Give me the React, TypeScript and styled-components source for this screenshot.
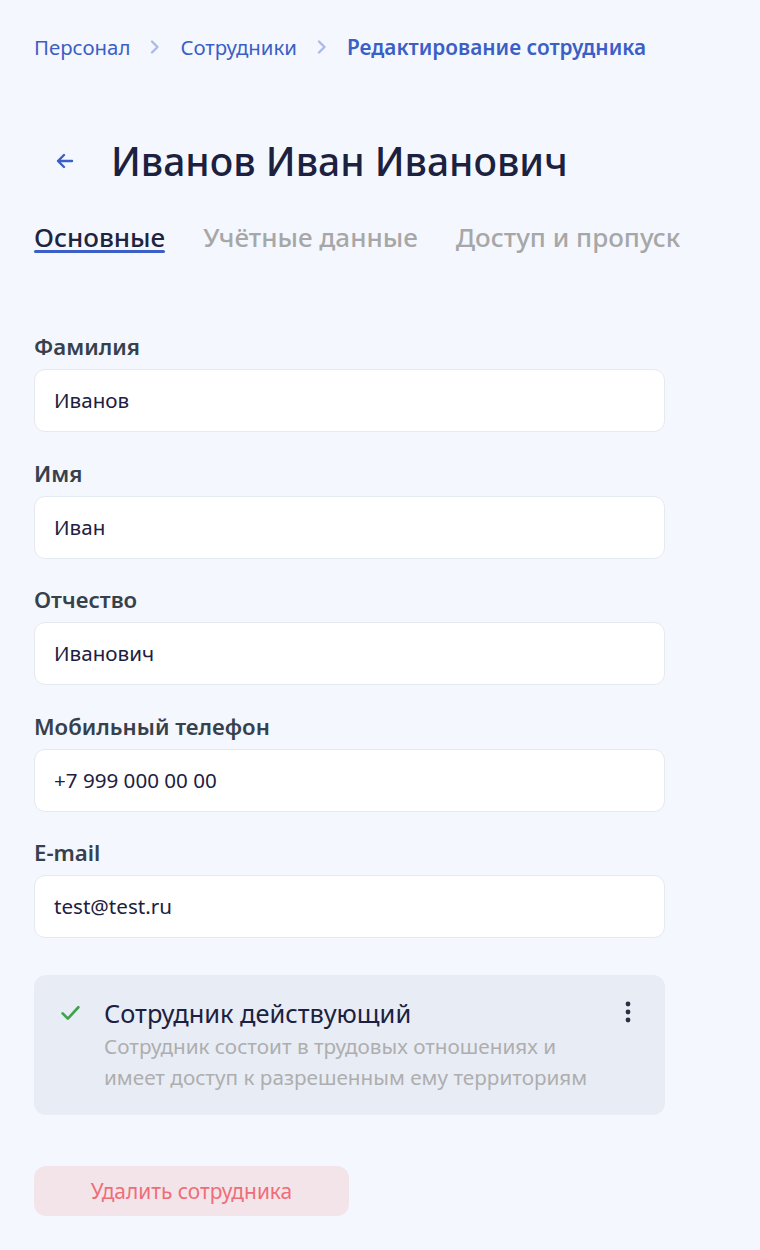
import React from "react";
import styled, { createGlobalStyle } from "styled-components";

const Global = createGlobalStyle`
  html, body { margin: 0; padding: 0; background: #f4f7fe; }
  body { font-family: "Noto Sans", "Open Sans", sans-serif; -webkit-font-smoothing: antialiased; }
  * { box-sizing: border-box; }
`;

const Page = styled.div`
  width: 760px;
  min-height: 1250px;
  background: #f4f7fe;
  padding: 31px 34px 0 34px;
  display: flex;
  flex-direction: column;
`;

const Crumbs = styled.nav`
  display: flex;
  align-items: center;
  gap: 19px;
  height: 32px;
`;

const Crumb = styled.span<{ $current?: boolean }>`
  font-size: ${(p) => (p.$current ? "20.8px" : "20.4px")};
  line-height: 32px;
  color: #3b5fc6;
  font-weight: ${(p) => (p.$current ? 600 : 400)};
`;

const Chevron = styled.svg`
  width: 12px;
  height: 16px;
  display: block;
`;

const TitleRow = styled.div`
  display: flex;
  align-items: center;
  margin-top: 68px;
  padding-left: 19px;
  gap: 34px;
  height: 60px;
`;

const BackIcon = styled.svg`
  width: 24px;
  height: 24px;
  display: block;
`;

const Title = styled.h1`
  margin: 0;
  font-size: 39px;
  font-weight: 500;
  color: #1c2140;
  line-height: 60px;
`;

const Tabs = styled.div`
  display: flex;
  gap: 38px;
  margin-top: 31px;
`;

const Tab = styled.div<{ $active?: boolean }>`
  font-size: 26px;
  font-weight: 500;
  line-height: 30px;
  color: ${(p) => (p.$active ? "#1f2440" : "#a7a7a7")};
  position: relative;
  &::after {
    content: "";
    display: ${(p) => (p.$active ? "block" : "none")};
    position: absolute;
    left: 0;
    right: 0;
    bottom: -1px;
    height: 3px;
    border-radius: 2px;
    background: #3b5fc6;
  }
`;

const Form = styled.div`
  display: flex;
  flex-direction: column;
  gap: 26.5px;
  margin-top: 80px;
  width: 631px;
`;

const Field = styled.div`
  display: flex;
  flex-direction: column;
  gap: 7px;
`;

const Label = styled.label`
  font-size: 22.2px;
  font-weight: 600;
  color: #36414c;
  line-height: 30px;
`;

const Input = styled.div`
  height: 63px;
  background: #ffffff;
  border: 1px solid #e5e9f0;
  border-radius: 11px;
  padding: 0 19px 1px;
  display: flex;
  align-items: center;
  font-size: 20.6px;
  line-height: 28px;
  color: #1c2140;
`;

const StatusCard = styled.div`
  margin-top: 37px;
  width: 631px;
  background: #e8ecf5;
  border-radius: 12px;
  padding: 20px 33px 22px 26px;
  display: flex;
  align-items: flex-start;
  gap: 23px;
`;

const Check = styled.svg`
  width: 21px;
  height: 21px;
  margin-top: 7px;
  flex: none;
`;

const StatusBody = styled.div`
  flex: 1;
  display: flex;
  flex-direction: column;
`;

const StatusTitle = styled.div`
  font-size: 25.4px;
  color: #1c2140;
  line-height: 36px;
`;

const StatusText = styled.div`
  font-size: 20.7px;
  color: #aeaeae;
  line-height: 31px;
`;

const Dots = styled.svg`
  width: 8px;
  height: 22px;
  margin-top: 6px;
  flex: none;
`;

const DeleteButton = styled.button`
  margin-top: 51px;
  width: 315px;
  height: 50px;
  border: none;
  border-radius: 12px;
  background: #f3e4ea;
  color: #ef6d77;
  font-family: "Noto Sans", "Open Sans", sans-serif;
  font-size: 20.9px;
  padding: 0;
  cursor: pointer;
`;

const ChevronIcon = () => (
  <Chevron viewBox="0 0 12 16">
    <path d="M3 2.5 L8.5 8 L3 13.5" fill="none" stroke="#a9bce9" strokeWidth="2.4" strokeLinecap="round" strokeLinejoin="round" />
  </Chevron>
);

const fields = [
  { label: "Фамилия", value: "Иванов" },
  { label: "Имя", value: "Иван" },
  { label: "Отчество", value: "Иванович" },
  { label: "Мобильный телефон", value: "+7 999 000 00 00" },
  { label: "E-mail", value: "test@test.ru" },
];

export default function App() {
  return (
    <>
      <Global />
      <Page>
        <Crumbs>
          <Crumb>Персонал</Crumb>
          <ChevronIcon />
          <Crumb>Сотрудники</Crumb>
          <ChevronIcon />
          <Crumb $current>Редактирование сотрудника</Crumb>
        </Crumbs>
        <TitleRow>
          <BackIcon viewBox="0 0 24 24">
            <path d="M19 12 H5 M11 6 L5 12 L11 18" fill="none" stroke="#3b5fc6" strokeWidth="2.4" strokeLinecap="round" strokeLinejoin="round" />
          </BackIcon>
          <Title>Иванов Иван Иванович</Title>
        </TitleRow>
        <Tabs>
          <Tab $active>Основные</Tab>
          <Tab>Учётные данные</Tab>
          <Tab>Доступ и пропуск</Tab>
        </Tabs>
        <Form>
          {fields.map((f) => (
            <Field key={f.label}>
              <Label>{f.label}</Label>
              <Input>{f.value}</Input>
            </Field>
          ))}
        </Form>
        <StatusCard>
          <Check viewBox="0 0 24 24">
            <path d="M3 13 L9 19 L21 6" fill="none" stroke="#3fa34d" strokeWidth="3" strokeLinecap="round" strokeLinejoin="round" />
          </Check>
          <StatusBody>
            <StatusTitle>Сотрудник действующий</StatusTitle>
            <StatusText>
              Сотрудник состоит в трудовых отношениях и
              <br />
              имеет доступ к разрешенным ему территориям
            </StatusText>
          </StatusBody>
          <Dots viewBox="0 0 8 22">
            <circle cx="4" cy="3" r="2.4" fill="#2b3040" />
            <circle cx="4" cy="11" r="2.4" fill="#2b3040" />
            <circle cx="4" cy="19" r="2.4" fill="#2b3040" />
          </Dots>
        </StatusCard>
        <DeleteButton>Удалить сотрудника</DeleteButton>
      </Page>
    </>
  );
}
